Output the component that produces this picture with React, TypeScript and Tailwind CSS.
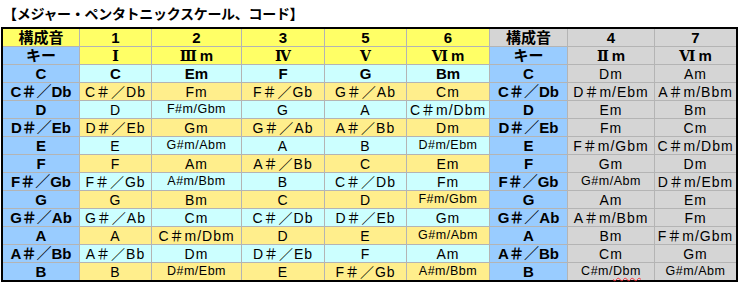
const FONT = "font-['Liberation_Sans','Noto_Sans_CJK_JP',sans-serif]";
const CJK = "font-['Noto_Sans_CJK_JP',sans-serif]";

const COL_W = ['w-[77px]', 'w-[72px]', 'w-[90px]', 'w-[83px]', 'w-[82px]', 'w-[83px]', 'w-[78px]', 'w-[87px]', 'w-[81px]'];

const KEYS = ['C', 'C＃／Db', 'D', 'D＃／Eb', 'E', 'F', 'F＃／Gb', 'G', 'G＃／Ab', 'A', 'A＃／Bb', 'B'];

// left block: 1, 2, 3, 5, 6
const LEFT: string[][] = [
  ['C', 'Em', 'F', 'G', 'Bm'],
  ['C＃／Db', 'Fm', 'F＃／Gb', 'G＃／Ab', 'Cm'],
  ['D', 'F#m/Gbm', 'G', 'A', 'C＃m/Dbm'],
  ['D＃／Eb', 'Gm', 'G＃／Ab', 'A＃／Bb', 'Dm'],
  ['E', 'G#m/Abm', 'A', 'B', 'D#m/Ebm'],
  ['F', 'Am', 'A＃／Bb', 'C', 'Em'],
  ['F＃／Gb', 'A#m/Bbm', 'B', 'C＃／Db', 'Fm'],
  ['G', 'Bm', 'C', 'D', 'F#m/Gbm'],
  ['G＃／Ab', 'Cm', 'C＃／Db', 'D＃／Eb', 'Gm'],
  ['A', 'C＃m/Dbm', 'D', 'E', 'G#m/Abm'],
  ['A＃／Bb', 'Dm', 'D＃／Eb', 'F', 'Am'],
  ['B', 'D#m/Ebm', 'E', 'F＃／Gb', 'A#m/Bbm'],
];

// right block: 4, 7
const RIGHT: string[][] = [
  ['Dm', 'Am'],
  ['D＃m/Ebm', 'A＃m/Bbm'],
  ['Em', 'Bm'],
  ['Fm', 'Cm'],
  ['F＃m/Gbm', 'C＃m/Dbm'],
  ['Gm', 'Dm'],
  ['G#m/Abm', 'D＃m/Ebm'],
  ['Am', 'Em'],
  ['A＃m/Bbm', 'Fm'],
  ['Bm', 'F＃m/Gbm'],
  ['Cm', 'Gm'],
  ['C#m/Dbm', 'G#m/Abm'],
];

const isSmall = (t: string) => /#m\//.test(t);

// roman numeral degree, serif numeral + sans "m"
function Degree({ n, m }: { n: string; m?: boolean }) {
  return (
    <span>
      <span className="font-['DejaVu_Serif','Liberation_Serif',serif] text-[14px]">{n}</span>
      {m && <span className="ml-[3px]">m</span>}
    </span>
  );
}

export default function App() {
  const line = 'border-[#b4b4b4]';

  const cell = (col: number, last: boolean, bg: string, content: React.ReactNode, extra = '') => (
    <div
      className={`${COL_W[col]} ${last ? 'h-[17px]' : 'h-[18px] border-b'} ${col < 8 ? 'border-r' : ''} ${line} ${bg} flex items-center justify-center whitespace-nowrap leading-none ${extra}`}
    >
      {content}
    </div>
  );

  const yellowHead = 'bg-[#ffff66]';
  const blue = 'bg-[#99ccff]';
  const gray = 'bg-[#d5d5d5]';
  const head = 'font-bold text-[15px]';
  const bodyText = (t: string) => (isSmall(t) ? 'text-[12.5px] tracking-[0.5px]' : 'text-[14px] tracking-[1px]');

  const degrees: [string, boolean][] = [
    ['Ⅰ', false],
    ['Ⅲ', true],
    ['Ⅳ', false],
    ['Ⅴ', false],
    ['Ⅵ', true],
  ];

  return (
    <div className={`w-[739px] h-[282px] bg-white text-black overflow-hidden ${FONT}`}>
      <div className={`h-[27px] pl-[3px] flex items-center font-bold text-[14px] tracking-[-0.3px] ${CJK}`}>
        【メジャー・ペンタトニックスケール、コード】
      </div>
      <div className="ml-[1px] w-[737px] border-2 border-black">
        {/* 構成音 row */}
        <div className="flex">
          {cell(0, false, yellowHead, '構成音', head)}
          {['1', '2', '3', '5', '6'].map((n, i) => (
            <div key={n} className="contents">{cell(i + 1, false, yellowHead, n, head)}</div>
          ))}
          {cell(6, false, gray, '構成音', head)}
          {cell(7, false, gray, '4', head)}
          {cell(8, false, gray, '7', head)}
        </div>
        {/* キー row */}
        <div className="flex">
          {cell(0, false, blue, 'キー', head)}
          {degrees.map(([n, m], i) => (
            <div key={n} className="contents">{cell(i + 1, false, yellowHead, <Degree n={n} m={m} />, head)}</div>
          ))}
          {cell(6, false, blue, 'キー', head)}
          {cell(7, false, gray, <Degree n="Ⅱ" m />, head)}
          {cell(8, false, gray, <Degree n="Ⅵ" m />, head)}
        </div>
        {KEYS.map((k, r) => {
          const last = r === KEYS.length - 1;
          const bg = r % 2 === 0 ? 'bg-[#ccffff]' : 'bg-[#ffee8c]';
          const bold = r === 0;
          return (
            <div key={k} className="flex">
              {cell(0, last, blue, k, 'font-bold text-[15px]')}
              {LEFT[r].map((t, i) => (
                <div key={i} className="contents">
                  {cell(i + 1, last, bg, t, bold ? 'font-bold text-[15px]' : bodyText(t))}
                </div>
              ))}
              {cell(6, last, blue, k, 'font-bold text-[15px]')}
              {RIGHT[r].map((t, i) => {
                const squiggle = last && i === 0;
                return (
                  <div key={i} className="contents">
                    {cell(
                      i + 7,
                      last,
                      gray,
                      squiggle ? (
                        <span>
                          C#m/<span className="underline decoration-wavy decoration-red-500 decoration-1 underline-offset-2">Dbm</span>
                        </span>
                      ) : (
                        t
                      ),
                      bodyText(t)
                    )}
                  </div>
                );
              })}
            </div>
          );
        })}
      </div>
    </div>
  );
}
